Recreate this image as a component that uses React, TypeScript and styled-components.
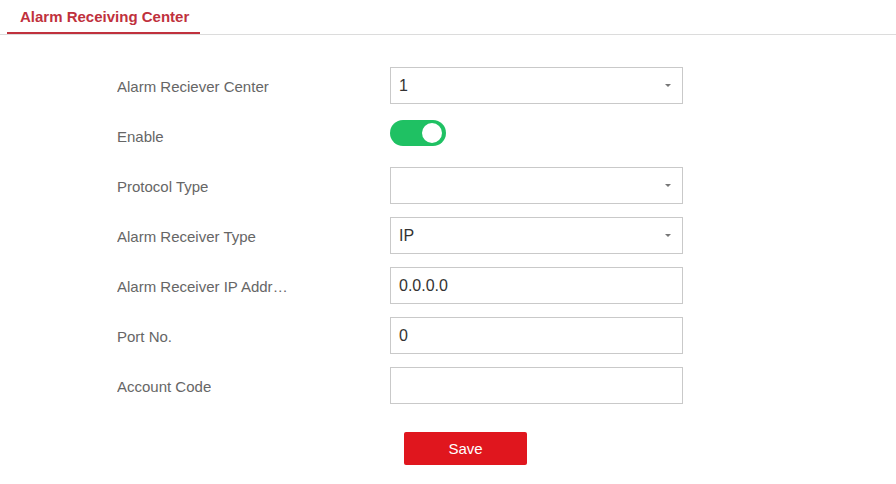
import styled, { createGlobalStyle } from "styled-components";

const GlobalStyle = createGlobalStyle`
  body {
    margin: 0;
    background: #fff;
    font-family: "Liberation Sans", Arial, sans-serif;
  }
`;

const Page = styled.div`
  width: 896px;
  height: 484px;
  overflow: hidden;
`;

const TabBar = styled.div`
  display: flex;
  height: 34px;
  padding-left: 7px;
  border-bottom: 1px solid #dcdcdc;
`;

const Tab = styled.div`
  display: flex;
  align-items: center;
  padding: 0 11px 0 13px;
  height: 32px;
  border-bottom: 2px solid #c0313d;
  font-size: 15px;
  font-weight: bold;
  color: #c0313d;
`;

const Form = styled.div`
  display: flex;
  flex-direction: column;
  gap: 13px;
  padding: 32px 0 0 117px;
`;

const Row = styled.div`
  display: flex;
  align-items: center;
  height: 37px;
`;

const Label = styled.div`
  width: 273px;
  font-size: 15px;
  color: #666;
`;

const LabelText = styled.span`
  display: inline-block;
  max-width: 172px;
  white-space: nowrap;
  overflow: hidden;
  text-overflow: ellipsis;
  vertical-align: middle;
`;

const Field = styled.div`
  box-sizing: border-box;
  display: flex;
  align-items: center;
  justify-content: space-between;
  width: 293px;
  height: 37px;
  padding: 0 9px 0 8px;
  border: 1px solid #c9c9c9;
  background: #fff;
  font-size: 16px;
  color: #333;
`;

const Caret = styled.span`
  width: 0;
  height: 0;
  margin-right: 2px;
  border-left: 3px solid transparent;
  border-right: 3px solid transparent;
  border-top: 3px solid #777;
`;

const Switch = styled.div<{ on: boolean }>`
  box-sizing: border-box;
  display: flex;
  justify-content: ${(p) => (p.on ? "flex-end" : "flex-start")};
  align-items: center;
  width: 56px;
  height: 26px;
  margin-top: -6px;
  padding: 0 4px;
  border-radius: 13px;
  background: ${(p) => (p.on ? "#1fc163" : "#ccc")};
`;

const Knob = styled.span`
  width: 20px;
  height: 20px;
  border-radius: 50%;
  background: #fff;
`;

const Actions = styled.div`
  padding: 28px 0 0 404px;
`;

const SaveButton = styled.button`
  width: 123px;
  height: 33px;
  border: none;
  border-radius: 2px;
  background: #e0161e;
  color: #fff;
  font-family: "Liberation Sans", Arial, sans-serif;
  font-size: 15px;
  cursor: pointer;
`;

const rows = [
  { label: "Alarm Reciever Center", value: "1", select: true },
  { label: "Enable", toggle: true },
  { label: "Protocol Type", value: "", select: true },
  { label: "Alarm Receiver Type", value: "IP", select: true },
  { label: "Alarm Receiver IP Address", value: "0.0.0.0" },
  { label: "Port No.", value: "0" },
  { label: "Account Code", value: "" },
];

const App = () => {
  return (
    <Page>
      <GlobalStyle />
      <TabBar>
        <Tab>Alarm Receiving Center</Tab>
      </TabBar>
      <Form>
        {rows.map((r, idx) => (
          <Row key={idx}>
            <Label>
              <LabelText>{r.label}</LabelText>
            </Label>
            {r.toggle ? (
              <Switch on>
                <Knob />
              </Switch>
            ) : (
              <Field>
                <span>{r.value}</span>
                {r.select && <Caret />}
              </Field>
            )}
          </Row>
        ))}
      </Form>
      <Actions>
        <SaveButton>Save</SaveButton>
      </Actions>
    </Page>
  );
};

export default App;
